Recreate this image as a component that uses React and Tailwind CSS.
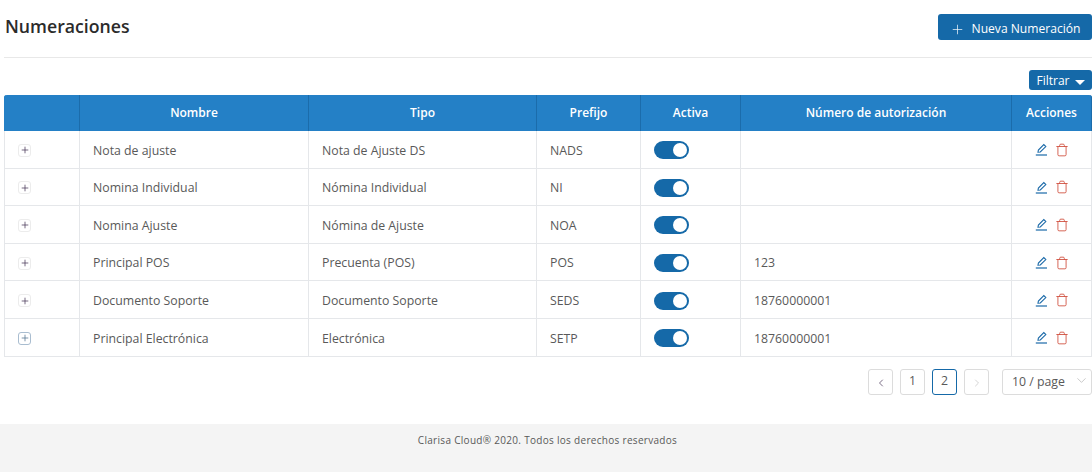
import React from "react";
import { Plus, ChevronLeft, ChevronRight, ChevronDown, Trash } from "lucide-react";

const rows = [
  { nombre: "Nota de ajuste", tipo: "Nota de Ajuste DS", prefijo: "NADS", auth: "" },
  { nombre: "Nomina Individual", tipo: "Nómina Individual", prefijo: "NI", auth: "" },
  { nombre: "Nomina Ajuste", tipo: "Nómina de Ajuste", prefijo: "NOA", auth: "" },
  { nombre: "Principal POS", tipo: "Precuenta (POS)", prefijo: "POS", auth: "123" },
  { nombre: "Documento Soporte", tipo: "Documento Soporte", prefijo: "SEDS", auth: "18760000001" },
  { nombre: "Principal Electrónica", tipo: "Electrónica", prefijo: "SETP", auth: "18760000001" },
];

const th = "border-l border-[#1b6cab] text-center font-semibold text-[12px] text-white";
const td = "border-b border-l border-[#e5e7ea] px-[13px] pt-[3px] text-[12.3px] text-[#595959]";

const EditIcon = () => (
  <svg width="13" height="13" viewBox="0 0 13 13" fill="none" stroke="#1a69a8" strokeWidth="1.1">
    <path d="M3 9.2 L3.4 7 L8.8 1.6 L10.8 3.6 L5.3 9 Z" />
    <path d="M0.8 12 H12" strokeWidth="1.2" />
  </svg>
);

const App = () => {
  return (
    <div className="h-[472px] w-[1092px] overflow-hidden bg-white font-['Open_Sans',sans-serif]">
      <div className="h-[424px] pl-[4px]">
        <div className="flex h-[58px] items-start justify-between border-b border-[#e8e8e8]">
          <h1 className="ml-px mt-[13px] text-[17.7px] leading-[26px] font-semibold text-[#2b2b2b]">Numeraciones</h1>
          <button className="mt-[14px] flex h-[26px] w-[154px] items-center justify-center gap-[7px] rounded-[3px] bg-[#1569a8] pt-[4px] text-[12.1px] text-white">
            <Plus size={15} strokeWidth={1.1} />
            Nueva Numeración
          </button>
        </div>
        <div className="flex h-[37px] items-end justify-end pb-[5px]">
          <button className="flex h-[20px] w-[63px] items-center justify-center gap-[5px] rounded-[3px] bg-[#1569a8] pt-px text-[12px] text-white">
            Filtrar
            <span className="mt-[3px] h-0 w-0 border-x-[5px] border-t-[5px] border-x-transparent border-t-white" />
          </button>
        </div>
        <table className="w-[1088px] table-fixed border-separate border-spacing-0">
          <colgroup>
            <col className="w-[75px]" />
            <col className="w-[229px]" />
            <col className="w-[228px]" />
            <col className="w-[104px]" />
            <col className="w-[100px]" />
            <col className="w-[271px]" />
            <col className="w-[81px]" />
          </colgroup>
          <thead>
            <tr className="h-[36px] bg-[#2480c6]">
              <th className="rounded-tl-[3px] border-l border-[#2480c6]" />
              <th className={th}>Nombre</th>
              <th className={th}>Tipo</th>
              <th className={th}>Prefijo</th>
              <th className={th}>Activa</th>
              <th className={th}>Número de autorización</th>
              <th className={`${th} rounded-tr-[3px] border-r border-r-[#1b6cab]`}>Acciones</th>
            </tr>
          </thead>
          <tbody>
            {rows.map((row, i) => (
              <tr key={row.prefijo} className="h-[37.6px]">
                <td className="border-b border-l border-[#e5e7ea] pl-[13px] pt-[2px]">
                  <span
                    className={`flex h-[13px] w-[13px] items-center justify-center rounded-[3px] border ${
                      i === 5 ? "border-[#a9bdd0]" : "border-[#ececec]"
                    }`}
                  >
                    <Plus size={10} strokeWidth={1.8} className={i === 5 ? "text-[#51718f]" : "text-[#4a3a58]"} />
                  </span>
                </td>
                <td className={td}>{row.nombre}</td>
                <td className={td}>{row.tipo}</td>
                <td className={td}>{row.prefijo}</td>
                <td className="border-b border-l border-[#e5e7ea] px-[13px] pt-[2px]">
                  <span className="flex h-[18px] w-[35px] items-center justify-end rounded-full bg-[#1569a8] pr-[2px]">
                    <span className="h-[14px] w-[14px] rounded-full bg-white" />
                  </span>
                </td>
                <td className={td}>{row.auth}</td>
                <td className="border-x border-b border-[#e5e7ea] pt-[1px]">
                  <span className="flex items-center justify-center gap-[7px]">
                    <EditIcon />
                    <Trash size={14} strokeWidth={1.5} className="text-[#d0503f]" />
                  </span>
                </td>
              </tr>
            ))}
          </tbody>
        </table>
        <div className="mt-[12px] flex items-center justify-end text-[12.3px] text-[#595959]">
          <button className="flex h-[26px] w-[25px] items-center justify-center rounded-[3px] border border-[#dcdcdc] pt-[2px] text-[#5b4a68]">
            <ChevronLeft size={12} strokeWidth={1.6} />
          </button>
          <button className="ml-[7px] flex h-[26px] w-[25px] items-center justify-center rounded-[3px] border border-[#dcdcdc] pb-px">1</button>
          <button className="ml-[7px] flex h-[26px] w-[25px] items-center justify-center rounded-[3px] border border-[#1569a8] pb-px">2</button>
          <button className="ml-[7px] flex h-[26px] w-[25px] items-center justify-center rounded-[3px] border border-[#dcdcdc] pt-[2px] text-[#c9c9c9]">
            <ChevronRight size={12} strokeWidth={1.6} />
          </button>
          <div className="ml-[13px] flex h-[26px] w-[90px] items-center justify-between rounded-[3px] border border-[#dcdcdc] pl-[9px] pr-[2px] pt-[2px]">
            10 / page
            <ChevronDown size={15} strokeWidth={1} className="mb-[5px] text-[#aaaaaa]" />
          </div>
        </div>
      </div>
      <footer className="h-[48px] bg-[#f4f4f4] pl-[3px] pt-[8px] text-center text-[10px] leading-[16px] tracking-[0.3px] text-[#595959]">
        Clarisa Cloud® 2020. Todos los derechos reservados
      </footer>
    </div>
  );
};

export default App;
